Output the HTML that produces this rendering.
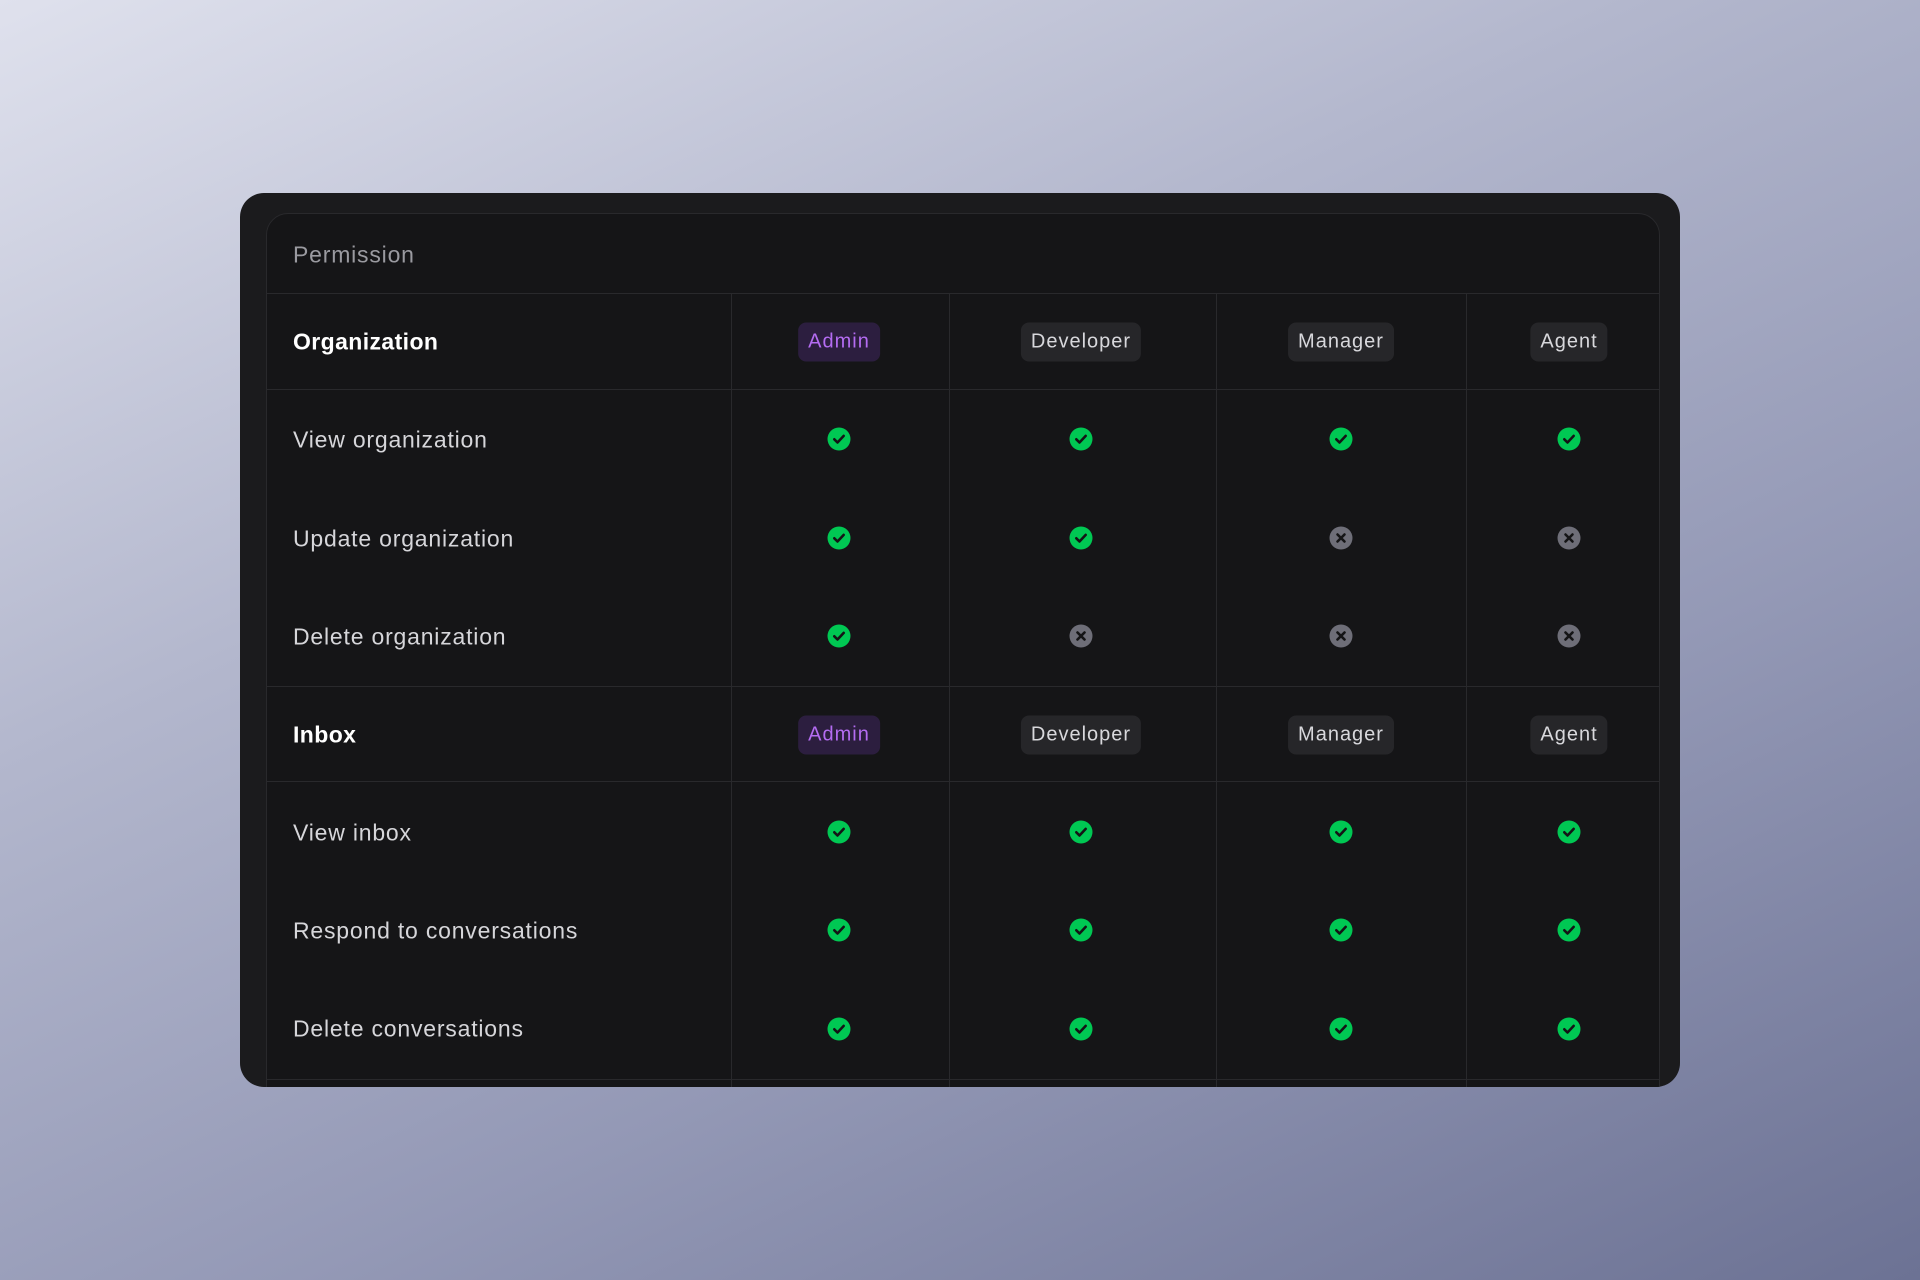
<!DOCTYPE html>
<html><head><meta charset="utf-8"><style>
*{margin:0;padding:0;box-sizing:border-box}
html,body{width:1920px;height:1280px;overflow:hidden}
body{background:linear-gradient(155deg,#dfe1ed 0%,#b3b7cd 35%,#9499b6 65%,#6c7294 100%);font-family:"Liberation Sans",sans-serif;position:relative}
.outer{position:absolute;left:240px;top:193px;width:1440px;height:894px;background:#1b1b1d;border-radius:24px;overflow:hidden}
.inner{position:absolute;left:26px;top:20px;width:1394px;height:1000px;background:#151517;border:1px solid #29292c;border-radius:22px}
.h{position:absolute;height:1px;background:#29292c;left:26px;width:1394px}
.v{position:absolute;width:1px;background:#29292c}
.t{position:absolute;left:53px;transform:translateY(-50%);font-size:23px;letter-spacing:0.8px;color:#d6d6da;white-space:nowrap}
.b{font-weight:bold;color:#fff;letter-spacing:0.4px}
.p{color:#9a9aa0}
.badge{position:absolute;transform:translate(-50%,-50%);height:39px;line-height:39px;padding:0 10px;border-radius:8px;background:#262629;color:#d8d8dc;font-size:20px;letter-spacing:1px;white-space:nowrap}
.badge.a{background:#2c1e3f;color:#b46cf2}
.ic{position:absolute;transform:translate(-50%,-50%);width:23px;height:23px}
</style></head><body>
<div class="outer">
<div class="inner"></div>
<div class="h" style="top:100px"></div>
<div class="h" style="top:196px"></div>
<div class="h" style="top:493px"></div>
<div class="h" style="top:588px"></div>
<div class="h" style="top:886px"></div>
<div class="v" style="left:491px;top:101px;height:800px"></div>
<div class="v" style="left:709px;top:101px;height:800px"></div>
<div class="v" style="left:976px;top:101px;height:800px"></div>
<div class="v" style="left:1226px;top:101px;height:800px"></div>

<div class="t p" style="top:62px">Permission</div>
<div class="t b" style="top:149px">Organization</div>
<div class="t" style="top:247px">View organization</div>
<div class="t" style="top:346px">Update organization</div>
<div class="t" style="top:444px">Delete organization</div>
<div class="t b" style="top:542px">Inbox</div>
<div class="t" style="top:640px">View inbox</div>
<div class="t" style="top:738px">Respond to conversations</div>
<div class="t" style="top:836px">Delete conversations</div>

<div class="badge a" style="left:599px;top:149px">Admin</div>
<div class="badge" style="left:841px;top:149px">Developer</div>
<div class="badge" style="left:1101px;top:149px">Manager</div>
<div class="badge" style="left:1329px;top:149px">Agent</div>
<div class="badge a" style="left:599px;top:542px">Admin</div>
<div class="badge" style="left:841px;top:542px">Developer</div>
<div class="badge" style="left:1101px;top:542px">Manager</div>
<div class="badge" style="left:1329px;top:542px">Agent</div>

<svg width="0" height="0" style="position:absolute"><defs>
<g id="ok"><circle cx="11.5" cy="11.5" r="11.5" fill="#00c853"/><path d="M6.8 11.8l3.2 3.2 6.2-6.6" fill="none" stroke="#141416" stroke-width="2.6" stroke-linecap="round" stroke-linejoin="round"/></g>
<g id="no"><circle cx="11.5" cy="11.5" r="11.5" fill="#6e6e78"/><path d="M8 8l7 7M15 8l-7 7" fill="none" stroke="#141416" stroke-width="2.6" stroke-linecap="round"/></g>
</defs></svg>

<svg class="ic" style="left:599px;top:246px"><use href="#ok"/></svg>
<svg class="ic" style="left:841px;top:246px"><use href="#ok"/></svg>
<svg class="ic" style="left:1101px;top:246px"><use href="#ok"/></svg>
<svg class="ic" style="left:1329px;top:246px"><use href="#ok"/></svg>

<svg class="ic" style="left:599px;top:345px"><use href="#ok"/></svg>
<svg class="ic" style="left:841px;top:345px"><use href="#ok"/></svg>
<svg class="ic" style="left:1101px;top:345px"><use href="#no"/></svg>
<svg class="ic" style="left:1329px;top:345px"><use href="#no"/></svg>

<svg class="ic" style="left:599px;top:443px"><use href="#ok"/></svg>
<svg class="ic" style="left:841px;top:443px"><use href="#no"/></svg>
<svg class="ic" style="left:1101px;top:443px"><use href="#no"/></svg>
<svg class="ic" style="left:1329px;top:443px"><use href="#no"/></svg>

<svg class="ic" style="left:599px;top:639px"><use href="#ok"/></svg>
<svg class="ic" style="left:841px;top:639px"><use href="#ok"/></svg>
<svg class="ic" style="left:1101px;top:639px"><use href="#ok"/></svg>
<svg class="ic" style="left:1329px;top:639px"><use href="#ok"/></svg>

<svg class="ic" style="left:599px;top:737px"><use href="#ok"/></svg>
<svg class="ic" style="left:841px;top:737px"><use href="#ok"/></svg>
<svg class="ic" style="left:1101px;top:737px"><use href="#ok"/></svg>
<svg class="ic" style="left:1329px;top:737px"><use href="#ok"/></svg>

<svg class="ic" style="left:599px;top:836px"><use href="#ok"/></svg>
<svg class="ic" style="left:841px;top:836px"><use href="#ok"/></svg>
<svg class="ic" style="left:1101px;top:836px"><use href="#ok"/></svg>
<svg class="ic" style="left:1329px;top:836px"><use href="#ok"/></svg>
</div>
</body></html>
